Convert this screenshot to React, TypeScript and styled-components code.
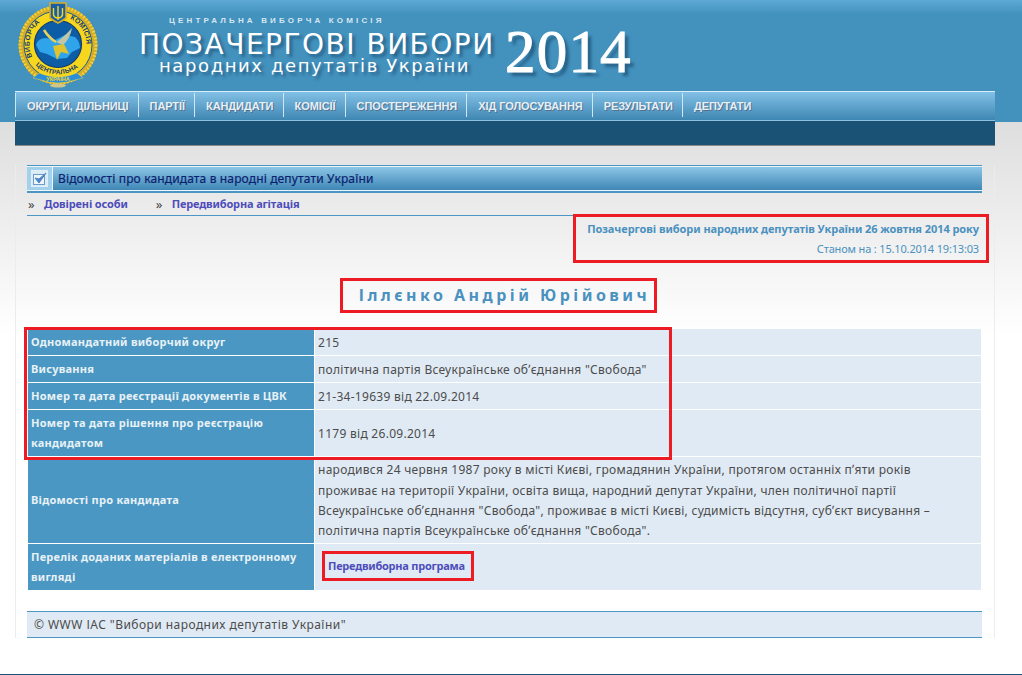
import React from 'react'
import styled, { createGlobalStyle } from 'styled-components'

const GlobalStyle = createGlobalStyle`
  html, body {
    margin: 0;
    padding: 0;
    background: #fff;
    font-family: Tahoma, 'DejaVu Sans', sans-serif;
  }
`

const Page = styled.div`
  width: 1022px;
  height: 675px;
  overflow: hidden;
  display: flex;
  flex-direction: column;
  border-bottom: 1px solid #1a5276;
  box-sizing: border-box;
  background: linear-gradient(#dedede 122px, #fff 335px);
`

const Header = styled.header`
  height: 122px;
  padding: 0 27px 0 15px;
  background: linear-gradient(#5ea9d6 0, #4391bd 14px);
  flex: none;
`

const TopRow = styled.div`
  height: 91px;
  display: flex;
`

const LogoWrap = styled.div`
  width: 88px;
  padding: 2px 0 0 2px;
  box-sizing: border-box;
  margin-right: 21px;
  flex: none;
`

const Titles = styled.div`
  width: 378px;
  padding-top: 16px;
  color: #fff;
  flex: none;
`

const Commission = styled.div`
  margin-left: 45px;
  font: bold 8px/10px 'Liberation Sans', sans-serif;
  letter-spacing: 3.15px;
  color: #d7e7f1;
  white-space: nowrap;
`

const MainTitle = styled.div`
  margin: 6px 0 0 15px;
  font: 28px/26px 'DejaVu Sans', sans-serif;
  letter-spacing: 1.5px;
  white-space: nowrap;
  text-shadow: 3px 3px 3px #27638a;
`

const SubTitle = styled.div`
  margin: 0 0 0 35px;
  font: 18px/16px 'DejaVu Sans', sans-serif;
  letter-spacing: 1.6px;
  white-space: nowrap;
  text-shadow: 3px 3px 3px #27638a;
`

const Year = styled.div`
  margin: 19px 0 0 3px;
  font: 61px/66px 'Liberation Serif', serif;
  letter-spacing: 1.2px;
  color: #fff;
  -webkit-text-stroke: 1px #fff;
  text-shadow: 4px 4px 3px #27638a;
`

const Nav = styled.nav`
  height: 30px;
  padding-top: 1px;
  display: flex;
  background: linear-gradient(#82c0e6, #3f87b3);
  border-top: 1px solid #d8edf8;
  border-bottom: 1px solid #8cc0de;
  box-sizing: border-box;
`

const NavItem = styled.a`
  height: 19px;
  padding: 5px 9.2px 0 11px;
  border-left: 1px solid #cfe6f3;
  font: bold 11px/16px 'Liberation Sans', sans-serif;
  letter-spacing: -0.1px;
  color: #e6f0f7;
  text-shadow: 1px 1px 0 #55708a;
  white-space: nowrap;
`

const DarkBar = styled.div`
  height: 24px;
  margin: -1px 27px 0 15px;
  background: #1a5276;
  border-bottom: 1px solid #8a8a8a;
  flex: none;
`

const Content = styled.main`
  margin: 19px 27px 0 15px;
  padding: 0 12px 0 11px;
  border-left: 1px solid #ececec;
  border-right: 1px solid #ececec;
  height: 473px;
  box-sizing: border-box;
  position: relative;
`

const SectionBar = styled.div`
  height: 23px;
  display: flex;
  align-items: stretch;
  border-top: 1px solid #4c96c4;
  border-bottom: 2px solid #4c96c4;
  padding: 1px 0;
  background: #eef5fa;
`

const IconCell = styled.div`
  width: 25px;
  margin-right: 1px;
  display: flex;
  align-items: center;
  justify-content: center;
  background: #a3d1ec;
  flex: none;
`

const SectionTitle = styled.div`
  flex: 1;
  padding-left: 5px;
  font: 12px/23px 'Noto Sans', sans-serif;
  letter-spacing: 0.14px;
  -webkit-text-stroke: 0.2px #0b1f70;
  color: #0b1f70;
  background: linear-gradient(#8cc5e6, #3f87b5);
`

const SubNav = styled.div`
  height: 22px;
  display: flex;
  align-items: center;
  border-bottom: 1px solid #4c96c4;
  font: bold 11px/14px 'Noto Sans', sans-serif;
`

const Chevron = styled.span`
  width: 16px;
  margin-left: 1px;
  color: #444;
  font-weight: normal;
  font-size: 13px;
`

const SubLink = styled.a`
  margin-right: 27px;
  letter-spacing: -0.15px;
  color: #4d4dbb;
`

const StatusBox = styled.div`
  width: 403px;
  height: 41px;
  margin: -2px -7px 0 auto;
  padding: 2px 7px 0 0;
  border: 3px solid #ed1c24;
  text-align: right;
`

const StatusTitle = styled.div`
  font: bold 11px/20px 'Noto Sans', sans-serif;
  letter-spacing: -0.07px;
  color: #4a91c0;
`

const StatusDate = styled.div`
  font: 11px/20px 'Noto Sans', sans-serif;
  letter-spacing: -0.16px;
  color: #4a91c0;
`

const NameRow = styled.div`
  margin-top: 15px;
  display: flex;
  justify-content: center;
`

const CandidateName = styled.h1`
  margin: 0 0 0 -12px;
  padding: 0 4px 0 16px;
  height: 29px;
  border: 3px solid #ed1c24;
  font: bold 16px/29px 'Noto Sans', sans-serif;
  letter-spacing: 3.45px;
  color: #4a91c0;
`

const Table = styled.div`
  margin: 16px 0 0 1px;
  display: grid;
  grid-template-columns: 286px 666px;
  gap: 1px;
  position: relative;
`

const LabelCell = styled.div<{ $h: number }>`
  display: flex;
  align-items: center;
  min-height: ${(p) => p.$h}px;
  padding: 0 3px;
  box-sizing: border-box;
  background: #4a97c3;
  color: #e8f1f6;
  font: bold 11px/20px 'Noto Sans', sans-serif;
  letter-spacing: 0.25px;
`

const ValueCell = styled.div`
  display: flex;
  align-items: center;
  padding: 2px 8px 0 3px;
  background: #e0eaf4;
  color: #4c4c4c;
  font: 12px/20.4px 'Noto Sans', sans-serif;
  letter-spacing: 0.28px;
`

const Link = styled.a`
  margin: -4px 0 0 4px;
  padding: 5px 6px 5px 3px;
  border: 3px solid #ed1c24;
  font: bold 11px/14px 'Noto Sans', sans-serif;
  letter-spacing: -0.24px;
  color: #4d4dbb;
`

const Highlight = styled.div`
  position: absolute;
  left: -4px;
  top: -2px;
  width: 642px;
  height: 127px;
  border: 3px solid #ed1c24;
  pointer-events: none;
`

const Footer = styled.footer`
  margin-top: 21px;
  height: 27px;
  padding-left: 7px;
  box-sizing: border-box;
  border-top: 1px solid #4c96c4;
  border-bottom: 1px solid #4c96c4;
  background: #e0eaf4;
  color: #4c4c4c;
  font: 12px/25px 'Noto Sans', sans-serif;
  letter-spacing: 0.45px;
`

// логотип ЦВК: вінок, коло, тризуб, стрічка
const Logo = () => (
  <svg width="82" height="86" viewBox="0 0 82 86">
    <defs>
      <path id="arcTop" d="M17 58 A28.5 28.5 0 1 1 65 58" />
      <path id="arcBottom" d="M9.5 46 A32 32 0 0 0 72.5 46" />
    </defs>
    <circle cx="41" cy="43" r="39.5" fill="#d6ad26" />
    <circle cx="41" cy="43" r="38" fill="none" stroke="#f2d53f" strokeWidth="3" strokeDasharray="1.5 2" />
    <circle cx="41" cy="43" r="34" fill="#f7d71e" stroke="#1c5f9a" strokeWidth="1" />
    <circle cx="41" cy="42" r="23.5" fill="#0c5da6" stroke="#153a6e" strokeWidth="1.2" />
    <path d="M19 43 Q21 36 29 36 L38 38 L48 33 L58 35 Q63 40 63 46 L55 50 L50 56 L40 57 L30 52 L23 50 Z" fill="#2fa4ea" />
    <path d="M27 28 Q32 36 39 40" fill="none" stroke="#e8d35a" strokeWidth="2.5" />
    <path d="M39 40 Q46 36 55 26 Q53 37 46 43 Z" fill="#bfc7a8" />
    <path d="M36 44 L47 42 L52 52 L44 50 L40 58 Z" fill="#e0c22e" />
    <text fontFamily="'Liberation Sans', sans-serif" fontSize="7" fontWeight="bold" fill="#173a6d" letterSpacing="0.4">
      <textPath href="#arcTop" startOffset="3%">ВИБОРЧА</textPath>
    </text>
    <text fontFamily="'Liberation Sans', sans-serif" fontSize="7" fontWeight="bold" fill="#173a6d" letterSpacing="0.4">
      <textPath href="#arcTop" startOffset="60%">КОМІСІЯ</textPath>
    </text>
    <text fontFamily="'Liberation Sans', sans-serif" fontSize="6.5" fontWeight="bold" fill="#173a6d" letterSpacing="0.2">
      <textPath href="#arcBottom" startOffset="22%">ЦЕНТРАЛЬНА</textPath>
    </text>
    <path d="M33 1 H49 V16 Q45 19 41 21 Q37 19 33 16 Z" fill="#1a5fa6" stroke="#d6ad26" strokeWidth="1.6" />
    <path d="M41 4 V18 M36.5 6 V13 Q37.5 16 41 16 Q44.5 16 45.5 13 V6" fill="none" stroke="#f7d71e" strokeWidth="1.4" />
    <path d="M22 71 Q41 79 60 71 L66 76 L58 78 Q41 84 24 78 L16 76 Z" fill="#2b8fd8" stroke="#e9d24a" strokeWidth="0.5" />
    <text x="41" y="79" textAnchor="middle" fontFamily="'Liberation Sans', sans-serif" fontSize="5.5" fontWeight="bold" fill="#f7d71e">УКРАЇНА</text>
    <ellipse cx="41" cy="83.5" rx="8" ry="2" fill="#cfc48a" />
  </svg>
)

const CheckIcon = () => (
  <svg width="17" height="17" viewBox="0 0 17 17">
    <rect x="0.5" y="0.5" width="16" height="16" fill="#dcecf7" stroke="#dff0fa" />
    <rect x="2.5" y="4.5" width="11" height="10" fill="#eef5fa" stroke="#6d9ccb" />
    <path d="M4 8 L8 13 L15 3 L8 9 Z" fill="#4d85c7" stroke="#4d85c7" />
  </svg>
)

const navItems = ['ОКРУГИ, ДІЛЬНИЦІ', 'ПАРТІЇ', 'КАНДИДАТИ', 'КОМІСІЇ', 'СПОСТЕРЕЖЕННЯ', 'ХІД ГОЛОСУВАННЯ', 'РЕЗУЛЬТАТИ', 'ДЕПУТАТИ']

const rows = [
  { label: 'Одномандатний виборчий округ', value: '215', h: 26 },
  { label: 'Висування', value: 'політична партія Всеукраїнське обʼєднання "Свобода"', h: 26 },
  { label: 'Номер та дата реєстрації документів в ЦВК', value: '21-34-19639 від 22.09.2014', h: 26 },
  { label: 'Номер та дата рішення про реєстрацію кандидатом', value: '1179 від 26.09.2014', h: 46 },
  {
    label: 'Відомості про кандидата',
    value:
      'народився 24 червня 1987 року в місті Києві, громадянин України, протягом останніх пʼяти років проживає на території України, освіта вища, народний депутат України, член політичної партії Всеукраїнське обʼєднання "Свобода", проживає в місті Києві, судимість відсутня, субʼєкт висування – політична партія Всеукраїнське обʼєднання "Свобода".',
    h: 86,
  },
]

export default function App() {
  return (
    <Page>
      <GlobalStyle />
      <Header>
        <TopRow>
          <LogoWrap>
            <Logo />
          </LogoWrap>
          <Titles>
            <Commission>ЦЕНТРАЛЬНА ВИБОРЧА КОМІСІЯ</Commission>
            <MainTitle>ПОЗАЧЕРГОВІ ВИБОРИ</MainTitle>
            <SubTitle>народних депутатів України</SubTitle>
          </Titles>
          <Year>2014</Year>
        </TopRow>
        <Nav>
          {navItems.map((item) => (
            <NavItem key={item}>{item}</NavItem>
          ))}
        </Nav>
      </Header>
      <DarkBar />
      <Content>
        <SectionBar>
          <IconCell>
            <CheckIcon />
          </IconCell>
          <SectionTitle>Відомості про кандидата в народні депутати України</SectionTitle>
        </SectionBar>
        <SubNav>
          <Chevron>»</Chevron>
          <SubLink>Довірені особи</SubLink>
          <Chevron>»</Chevron>
          <SubLink>Передвиборна агітація</SubLink>
        </SubNav>
        <StatusBox>
          <StatusTitle>Позачергові вибори народних депутатів України 26 жовтня 2014 року</StatusTitle>
          <StatusDate>Станом на : 15.10.2014 19:13:03</StatusDate>
        </StatusBox>
        <NameRow>
          <CandidateName>Іллєнко Андрій Юрійович</CandidateName>
        </NameRow>
        <Table>
          {rows.map((row) => (
            <React.Fragment key={row.label}>
              <LabelCell $h={row.h}>{row.label}</LabelCell>
              <ValueCell>{row.value}</ValueCell>
            </React.Fragment>
          ))}
          <LabelCell $h={46}>Перелік доданих матеріалів в електронному вигляді</LabelCell>
          <ValueCell>
            <Link>Передвиборна програма</Link>
          </ValueCell>
          <Highlight />
        </Table>
        <Footer>© WWW ІАС "Вибори народних депутатів України"</Footer>
      </Content>
    </Page>
  )
}
